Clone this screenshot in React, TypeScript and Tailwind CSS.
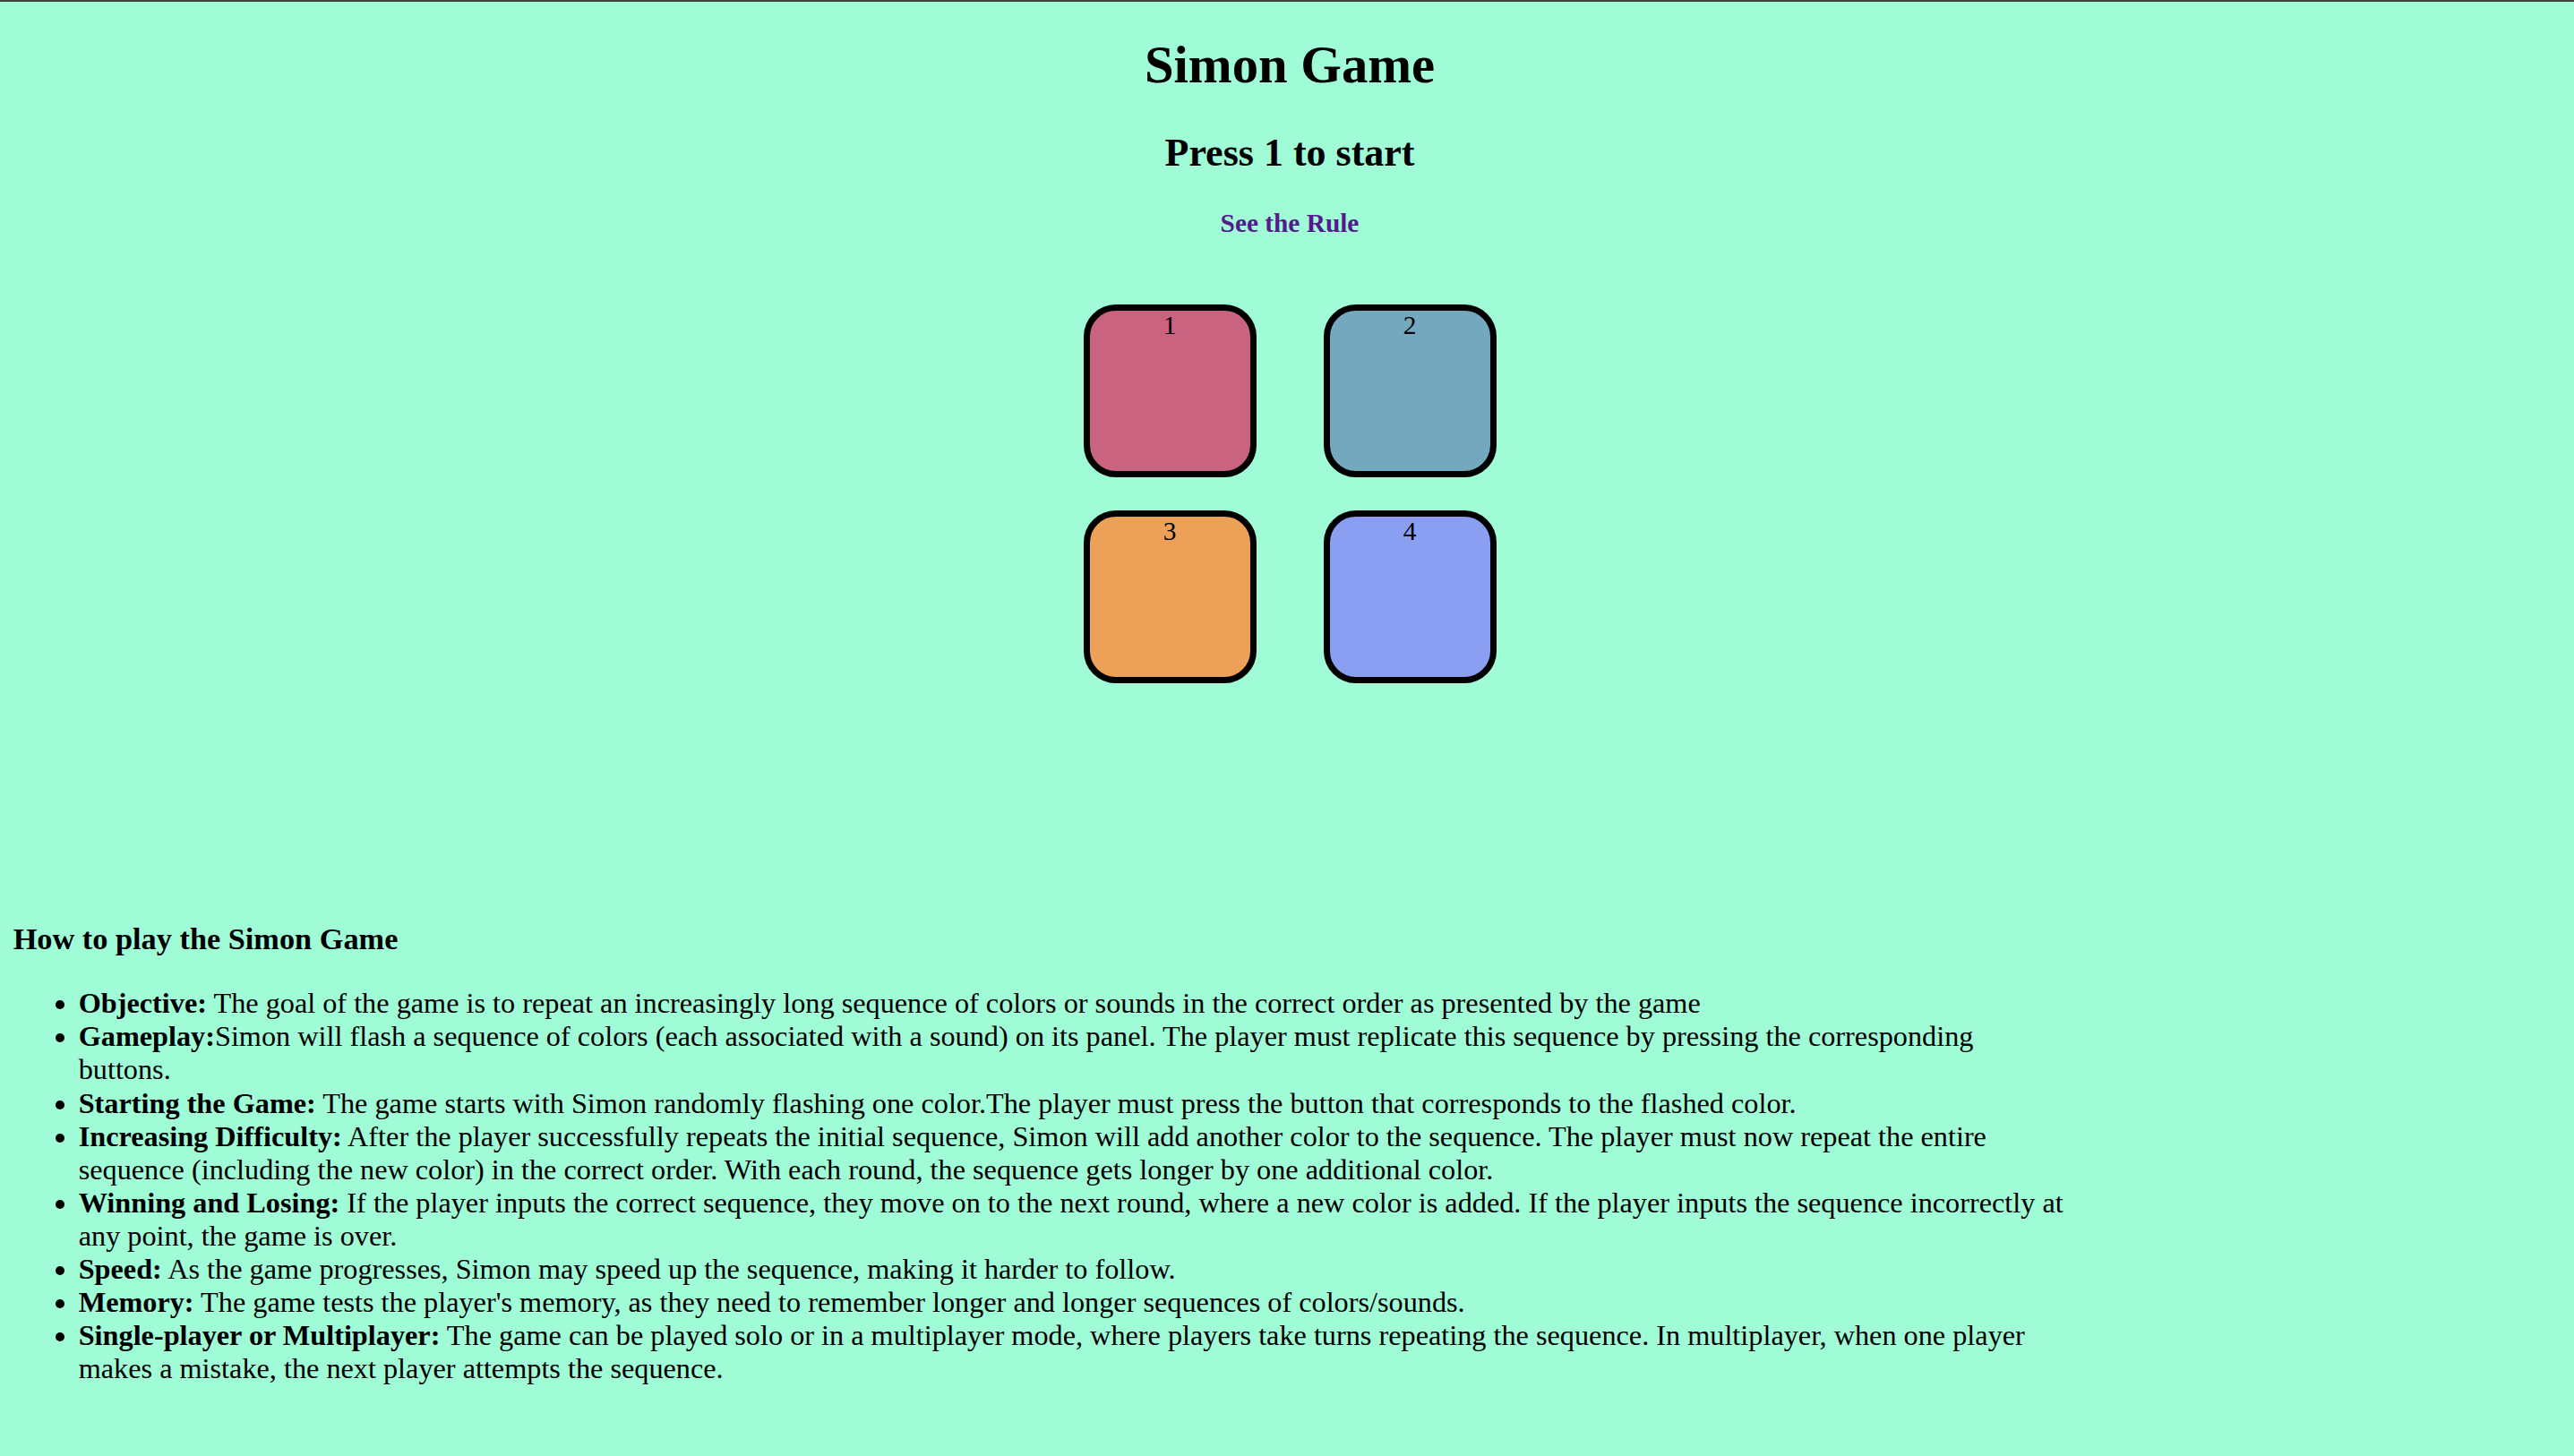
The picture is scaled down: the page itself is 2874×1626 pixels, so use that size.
const rules: { title: string; text: string }[] = [
  {
    title: 'Objective:',
    text: ' The goal of the game is to repeat an increasingly long sequence of colors or sounds in the correct order as presented by the game',
  },
  {
    title: 'Gameplay:',
    text: 'Simon will flash a sequence of colors (each associated with a sound) on its panel. The player must replicate this sequence by pressing the corresponding buttons.',
  },
  {
    title: 'Starting the Game:',
    text: ' The game starts with Simon randomly flashing one color.The player must press the button that corresponds to the flashed color.',
  },
  {
    title: 'Increasing Difficulty:',
    text: ' After the player successfully repeats the initial sequence, Simon will add another color to the sequence. The player must now repeat the entire sequence (including the new color) in the correct order. With each round, the sequence gets longer by one additional color.',
  },
  {
    title: 'Winning and Losing:',
    text: ' If the player inputs the correct sequence, they move on to the next round, where a new color is added. If the player inputs the sequence incorrectly at any point, the game is over.',
  },
  {
    title: 'Speed:',
    text: ' As the game progresses, Simon may speed up the sequence, making it harder to follow.',
  },
  {
    title: 'Memory:',
    text: " The game tests the player's memory, as they need to remember longer and longer sequences of colors/sounds.",
  },
  {
    title: 'Single-player or Multiplayer:',
    text: ' The game can be played solo or in a multiplayer mode, where players take turns repeating the sequence. In multiplayer, when one player makes a mistake, the next player attempts the sequence.',
  },
]

const pads = [
  { n: 1, bg: 'bg-[#c96380]' },
  { n: 2, bg: 'bg-[#74a8be]' },
  { n: 3, bg: 'bg-[#eca058]' },
  { n: 4, bg: 'bg-[#8a9ff2]' },
]

export default function App() {
  return (
    <div className="min-h-screen bg-[#a0fbd7] text-black font-['Liberation_Serif','Times_New_Roman',serif]">
      <div className="h-[2px] bg-[#404040]" />
      <div className="px-[14.7px] pb-[60px]">
        <div className="pl-[6px]">
          <h1 className="mt-[37px] text-center text-[58.65px] leading-[1.15] font-bold">Simon Game</h1>
          <h2 className="mt-[39.3px] text-center text-[44px] leading-[1.15] font-bold">Press 1 to start</h2>
          <p className="mt-[36.5px] text-center text-[29.33px] leading-[1.15] font-bold">
            <a href="#rules" className="text-[#551a8b]">See the Rule</a>
          </p>

          {/* Game board */}
          <div className="mt-[73px] grid grid-cols-[193px_193px] justify-center gap-x-[75px] gap-y-[37px]">
            {pads.map(p => (
              <button
                key={p.n}
                className={`${p.bg} h-[193px] w-[193px] rounded-[36px] border-[7.5px] border-black flex justify-center items-start text-[29.33px] leading-[1.15]`}
              >
                {p.n}
              </button>
            ))}
          </div>
        </div>

        <h3 id="rules" className="mt-[266px] text-[34.3px] leading-[1.15] font-bold">How to play the Simon Game</h3>
        <ul className="mt-[34.3px] w-[2294px] list-disc pl-[73px] text-[32.26px] leading-[37.1px]">
          {rules.map(r => (
            <li key={r.title}>
              <b>{r.title}</b>
              {r.text}
            </li>
          ))}
        </ul>
      </div>
    </div>
  )
}
